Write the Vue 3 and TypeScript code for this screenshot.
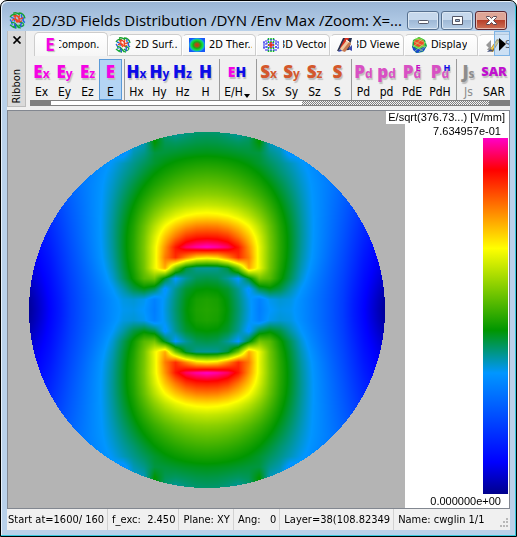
<script setup lang="ts">
import { onMounted, ref } from 'vue'

type Rgb = [number, number, number]

interface Tool {
  main: string
  sub?: string
  sup?: string
  label: string
  tone: string
  size?: string
  active?: boolean
  disabled?: boolean
  menu?: boolean
}

const tabs = [
  { icon: 'letter', label: 'Compon.', cut: true },
  { icon: 'sphere', label: '2D Surf..', cut: false },
  { icon: 'thermal', label: '2D Ther..', cut: false },
  { icon: 'vector', label: '3D Vector', cut: true },
  { icon: 'viewer', label: '3D Viewer', cut: true },
  { icon: 'display', label: 'Display', cut: false },
  { icon: 'stats', label: 'Stat..', cut: false },
]

const groups: Tool[][] = [
  [
    { main: 'E', sub: 'x', label: 'Ex', tone: 'magenta' },
    { main: 'E', sub: 'y', label: 'Ey', tone: 'magenta' },
    { main: 'E', sub: 'z', label: 'Ez', tone: 'magenta' },
    { main: 'E', label: 'E', tone: 'magenta', active: true },
  ],
  [
    { main: 'H', sub: 'x', label: 'Hx', tone: 'blue' },
    { main: 'H', sub: 'y', label: 'Hy', tone: 'blue' },
    { main: 'H', sub: 'z', label: 'Hz', tone: 'blue' },
    { main: 'H', label: 'H', tone: 'blue' },
  ],
  [{ main: 'EH', label: 'E/H', tone: 'mixed', size: 'menu', menu: true }],
  [
    { main: 'S', sub: 'x', label: 'Sx', tone: 'rust' },
    { main: 'S', sub: 'y', label: 'Sy', tone: 'rust' },
    { main: 'S', sub: 'z', label: 'Sz', tone: 'rust' },
    { main: 'S', label: 'S', tone: 'rust' },
  ],
  [
    { main: 'P', sub: 'd', label: 'Pd', tone: 'pink' },
    { main: 'p', sub: 'd', label: 'pd', tone: 'pink' },
    { main: 'P', sub: 'd', sup: 'E', label: 'PdE', tone: 'pink', size: 'wide' },
    { main: 'P', sub: 'd', sup: 'H', label: 'PdH', tone: 'pink', size: 'wide' },
  ],
  [
    { main: 'J', sub: 's', label: 'Js', tone: 'grey', disabled: true },
    { main: 'SAR', label: 'SAR', tone: 'purple', size: 'wide' },
  ],
]

const status = ['Start at=1600/ 160', 'f_exc:  2.450', 'Plane: XY', 'Ang:   0', 'Layer=38(108.82349', 'Name: cwglin 1/1']

/* Colour scale of the legend, from the field minimum to its maximum. */
const scale: [number, Rgb][] = [
  [0, [0, 0, 140]],
  [0.09, [0, 0, 255]],
  [0.336, [0, 150, 255]],
  [0.459, [0, 150, 0]],
  [0.685, [255, 255, 0]],
  [0.91, [255, 0, 0]],
  [1, [255, 0, 200]],
]

/* Normalised |E| in thousandths on one quadrant of the mesh; rows go outwards from the axis. */
const field: number[][] = [
  [490, 483, 455, 405, 350, 295, 335, 348, 343, 320, 290, 260, 225, 187, 135, 92, 50, 8],
  [485, 478, 450, 400, 345, 302, 345, 358, 350, 322, 291, 260, 226, 188, 137, 95, 54, 14],
  [460, 455, 435, 388, 325, 420, 450, 425, 378, 336, 300, 265, 230, 192, 144, 101, 64, 28],
  [425, 418, 385, 332, 440, 560, 535, 470, 415, 358, 312, 273, 236, 198, 152, 108, 76, 44],
  [385, 390, 432, 560, 760, 670, 560, 485, 430, 372, 326, 283, 243, 205, 161, 117, 86, 58],
  [700, 720, 790, 870, 800, 665, 565, 493, 438, 381, 336, 293, 251, 212, 169, 126, 95, 70],
  [1000, 985, 955, 892, 780, 666, 567, 495, 442, 386, 340, 299, 258, 219, 177, 136, 104, 82],
  [890, 885, 862, 805, 736, 650, 562, 493, 442, 388, 342, 303, 264, 226, 185, 146, 114, 94],
  [800, 795, 772, 735, 685, 620, 550, 487, 438, 387, 342, 305, 268, 232, 193, 155, 124, 104],
  [705, 700, 686, 660, 625, 580, 527, 475, 430, 383, 341, 307, 272, 238, 201, 165, 136, 116],
  [635, 630, 620, 602, 577, 543, 502, 460, 420, 378, 339, 309, 276, 244, 210, 177, 150, 130],
  [585, 582, 573, 558, 537, 510, 478, 443, 408, 371, 337, 309, 280, 251, 221, 191, 165, 145],
  [548, 545, 537, 524, 505, 483, 456, 426, 395, 363, 334, 309, 284, 258, 232, 206, 182, 160],
  [515, 512, 505, 493, 478, 459, 434, 407, 382, 354, 328, 304, 282, 262, 242, 220, 198, 178],
  [482, 480, 474, 465, 453, 436, 414, 392, 368, 342, 320, 300, 282, 264, 246, 228, 210, 190],
  [449, 447, 443, 437, 431, 428, 393, 372, 318, 325, 310, 296, 282, 266, 250, 234, 216, 198],
  [426, 424, 418, 412, 418, 460, 368, 350, 308, 310, 300, 290, 280, 266, 250, 234, 216, 198],
  [408, 406, 396, 380, 400, 465, 360, 330, 300, 300, 292, 284, 276, 264, 250, 234, 216, 198],
]

const fieldMap = ref<HTMLCanvasElement | null>(null)
const diameter = 356

function colourOf(value: number): Rgb {
  for (let k = 1; k < scale.length; k++) {
    const [hi, b] = scale[k]
    if (value <= hi || k === scale.length - 1) {
      const [lo, a] = scale[k - 1]
      const t = Math.min(1, Math.max(0, (value - lo) / (hi - lo)))
      return [a[0] + (b[0] - a[0]) * t, a[1] + (b[1] - a[1]) * t, a[2] + (b[2] - a[2]) * t]
    }
  }
  return scale[0][1]
}

function sample(x: number, y: number): number {
  const last = field.length - 1
  const i = Math.min(last - 1, Math.floor(x))
  const j = Math.min(last - 1, Math.floor(y))
  const u = Math.min(1, x - i)
  const v = Math.min(1, y - j)
  const near = field[j][i] * (1 - u) + field[j][i + 1] * u
  const far = field[j + 1][i] * (1 - u) + field[j + 1][i + 1] * u
  return (near * (1 - v) + far * v) / 1000
}

onMounted(() => {
  const context = fieldMap.value?.getContext('2d')
  if (!context) return
  const image = context.createImageData(diameter, diameter)
  const radius = diameter / 2
  const cell = radius / (field.length - 1)
  for (let row = 0; row < diameter; row++) {
    for (let column = 0; column < diameter; column++) {
      const dx = Math.abs(column + 0.5 - radius)
      const dy = Math.abs(row + 0.5 - radius)
      if (dx * dx + dy * dy > radius * radius) continue
      const [r, g, b] = colourOf(sample(dx / cell, dy / cell))
      const at = (row * diameter + column) * 4
      image.data[at] = r
      image.data[at + 1] = g
      image.data[at + 2] = b
      image.data[at + 3] = 255
    }
  }
  context.putImageData(image, 0, 0)
})
</script>

<template>
  <main class="window">
    <header class="titlebar">
      <svg class="title-icon" viewBox="0 0 16 16" aria-hidden="true">
        <g fill="none" stroke-width="1.3">
          <path d="M1 5Q3 1 7 3M9 1Q14 1 15 6M4 1Q8 0 10 3" stroke="#18a32c" />
          <path d="M1 7Q3 9 3 12M14 5Q12 8 15 10M2 5Q6 6 5 9M12 2Q11 5 14 8" stroke="#2468dc" />
          <path d="M4 4Q7 2 9 5T13 5M3 8Q6 5 8 8T12 8M6 3Q5 7 8 10M10 3Q8 7 11 10" stroke="#ee4420" />
          <path d="M2 10Q5 9 7 12T11 15M4 14Q7 11 9 15M10 10Q13 9 14 12M1 12Q4 15 7 15M9 12Q12 15 14 12" stroke="#14a83a" />
          <path d="M5 11Q7 14 6 15M12 10Q10 13 12 14" stroke="#2050d8" />
        </g>
      </svg>
      <h1>2D/3D Fields Distribution /DYN /Env Max /Zoom: X=...</h1>
      <div class="controls">
        <button type="button" aria-label="Minimize">
          <svg viewBox="0 0 30 17"><rect x="10.500" y="8.500" width="10" height="3" rx="1" fill="#fff" stroke="#535666" /></svg>
        </button>
        <button type="button" aria-label="Maximize">
          <svg viewBox="0 0 30 17"><path d="M10.500 4.500h10v8h-10zM13.500 7.500v2h4v-2z" fill="#fff" fill-rule="evenodd" stroke="#535666" /></svg>
        </button>
        <button type="button" class="close" aria-label="Close">
          <svg viewBox="0 0 30 17"><path d="M10.500 4.500h3l2 2 2-2h3v1l-3 3 3 3v1h-3l-2-2-2 2h-3v-1l3-3-3-3z" fill="#fff" stroke="#5b4a55" /></svg>
        </button>
      </div>
    </header>

    <section class="client">
      <div class="ribbon">
        <div class="grip">
          <button type="button" aria-label="Hide ribbon">
            <svg viewBox="0 0 10 8"><path d="M1.500 0.500l7 7M8.500 0.500l-7 7" stroke="#000" stroke-width="1.700" /></svg>
          </button>
          <span>Ribbon</span>
        </div>
        <div class="ribbon-body">
          <nav class="tabs">
            <button v-for="(tab, index) in tabs" :key="tab.label" type="button" class="tab" :class="{ selected: index === 0 }">
              <span v-if="tab.icon === 'letter'" class="tab-letter">E</span>
              <svg v-else class="tab-icon" viewBox="0 0 16 16" aria-hidden="true">
                <g v-if="tab.icon === 'sphere'" fill="none" stroke-width="1.300">
                  <path d="M1 5Q3 1 7 3M9 1Q14 1 15 6M4 1Q8 0 10 3" stroke="#18a32c" />
                  <path d="M1 7Q3 9 3 12M14 5Q12 8 15 10M2 5Q6 6 5 9M12 2Q11 5 14 8" stroke="#2468dc" />
                  <path d="M4 4Q7 2 9 5T13 5M3 8Q6 5 8 8T12 8M6 3Q5 7 8 10M10 3Q8 7 11 10" stroke="#ee4420" />
                  <path d="M2 10Q5 9 7 12T11 15M4 14Q7 11 9 15M10 10Q13 9 14 12M1 12Q4 15 7 15M9 12Q12 15 14 12" stroke="#14a83a" />
                  <path d="M5 11Q7 14 6 15M12 10Q10 13 12 14" stroke="#2050d8" />
                </g>
                <g v-else-if="tab.icon === 'thermal'">
                  <defs>
                    <radialGradient id="heat" cx="0.5" cy="0.5" r="0.62">
                      <stop offset="0" stop-color="#d83010" />
                      <stop offset="0.200" stop-color="#a05818" />
                      <stop offset="0.380" stop-color="#18a818" />
                      <stop offset="0.580" stop-color="#10e040" />
                      <stop offset="0.740" stop-color="#18a0e8" />
                      <stop offset="0.850" stop-color="#1858f8" />
                    </radialGradient>
                  </defs>
                  <rect x="0" y="1" width="16" height="14" fill="url(#heat)" />
                </g>
                <g v-else-if="tab.icon === 'vector'">
                  <path d="M1 4v9M15 4v9M3 3v11M13 3v11" stroke="#2020e8" stroke-dasharray="2 1" />
                  <path d="M5.500 1v14M8 1v14M10.500 1v14" stroke="#10c020" stroke-width="1.500" stroke-dasharray="2 1" />
                  <path d="M0 6h16M0 10h16M4 3h8M4 13h8" stroke="#2828f0" stroke-dasharray="2 1" />
                  <path d="M8 5v6M5 8h6" stroke="#f02020" stroke-width="1.500" />
                </g>
                <g v-else-if="tab.icon === 'viewer'">
                  <path d="M0 14L6 1h9l-3 12z" fill="#27304c" />
                  <path d="M3 11L8 1h4L7 12z" fill="#d83020" />
                  <path d="M2 13L10 3l4 3-7 8z" fill="#f0c8a0" />
                  <path d="M5 14l7-9 2 2-6 8z" fill="#c87850" />
                  <path d="M1 15l2-3 2 2zM11 12l4-4v6z" fill="#3848b0" />
                  <path d="M9 3l3 2" stroke="#fff" />
                </g>
                <g v-else-if="tab.icon === 'display'">
                  <path d="M8 0l6 3 2 6-4 6-7 1-4-6L2 3z" fill="#18a848" />
                  <path d="M1 8l4 4 10-3-2 5-7 2-4-3z" fill="#1848d0" />
                  <path d="M3 3l5-3 5 3 1 6-5 3-6-3z" fill="#68d038" />
                  <path d="M3 4l5-2 5 2v4L8 10 3 8z" fill="#f04828" />
                  <path d="M2 4l12 6M1 8l11 6M4 1l11 5M12 1L2 10M15 5L4 14M15 9l-7 6" fill="none" stroke="#b8ee80" stroke-width="0.600" />
                </g>
                <g v-else>
                  <path d="M1 8l5-5v10zM2 13q2-5 6 0z" fill="#989898" />
                  <path d="M4 14L12 2l3 1-7 12z" fill="#9a7424" />
                  <path d="M6 13l7-9" stroke="#f0cc50" stroke-width="2" />
                  <path d="M2 15q4-5 6-1z" fill="#405080" />
                </g>
              </svg>
              <span class="tab-label"><span :class="{ clipped: tab.cut }">{{ tab.label }}</span></span>
            </button>
            <button type="button" class="tab-scroll" aria-label="Scroll tabs right">
              <svg viewBox="0 0 14 22"><path d="M4 5l7 6-7 7z" fill="#000" /></svg>
            </button>
          </nav>

          <div class="tools">
            <div v-for="(group, g) in groups" :key="g" class="group">
              <button
                v-for="tool in group"
                :key="tool.label"
                type="button"
                class="tool"
                :class="[tool.size, { active: tool.active }]"
                :disabled="tool.disabled"
              >
                <span class="glyph" :class="tool.tone" aria-hidden="true">
                  <template v-if="tool.tone === 'mixed'"><b class="m">E</b><b class="h">H</b></template>
                  <template v-else><b>{{ tool.main }}</b></template>
                  <span v-if="tool.sub" class="sub">{{ tool.sub }}<i v-if="tool.sup" :class="{ h: tool.sup === 'H' }">{{ tool.sup }}</i></span>
                </span>
                <span class="tool-label">{{ tool.label }}<svg v-if="tool.menu" viewBox="0 0 6 4"><path d="M0 0h6L3 4z" /></svg></span>
              </button>
            </div>
          </div>

          <div class="scroller"><i class="dark"></i><i class="light"></i><i class="hatch"></i><i class="dark"></i></div>
        </div>
      </div>

      <div class="view">
        <div class="plot">
          <canvas ref="fieldMap" :width="diameter" :height="diameter" role="img" aria-label="Electric field magnitude in the XY plane"></canvas>
        </div>
        <aside class="legend">
          <p class="unit">E/sqrt(376.73...) [V/mm]</p>
          <p class="max">7.634957e-01</p>
          <div class="bar"></div>
          <p class="min">0.000000e+00</p>
        </aside>
      </div>

      <footer class="status">
        <span v-for="item in status" :key="item">{{ item }}</span>
        <svg class="resize" viewBox="0 0 10 10" aria-hidden="true">
          <path d="M7 0h2v2h-2zM4 3h2v2h-2zM7 3h2v2h-2zM1 7h2v2h-2zM4 7h2v2h-2zM7 7h2v2h-2z" fill="#b8b8b8" />
        </svg>
      </footer>
    </section>
  </main>
</template>

<style>
body {
  margin: 0;
  background: #fff;
}
</style>

<style scoped>
* {
  box-sizing: border-box;
}

button {
  margin: 0;
  padding: 0;
  border: 0;
  background: none;
  color: inherit;
  font: inherit;
}

p,
h1 {
  margin: 0;
  font-weight: normal;
}

.window {
  display: flex;
  flex-direction: column;
  min-height: 100vh;
  padding: 0 6px 6px;
  border: 1px solid #000;
  border-radius: 7px 7px 0 0;
  background: linear-gradient(#98b4d5, #b9d1ea 30px);
  box-shadow: inset -1px -1px #35c8de, inset 1px 1px #e6f0fa;
  color: #000;
  font: 12px/14px "DejaVu Sans Condensed", "Noto Sans", sans-serif;
}

.titlebar {
  display: flex;
  align-items: center;
  height: 30px;
  padding: 8px 3px 0 2px;
}

.title-icon {
  flex: none;
  width: 17px;
  height: 17px;
  margin-right: 6px;
}

h1 {
  flex: 1;
  overflow: hidden;
  white-space: nowrap;
  font: 15px/22px "Open Sans", sans-serif;
}

.controls {
  display: flex;
  gap: 2px;
}

.controls button {
  width: 32px;
  height: 19px;
  border: 1px solid #56708f;
  border-radius: 3px;
  background: linear-gradient(#c6d8ec 45%, #9fb9d6 50%, #b6cde6);
  box-shadow: inset 0 0 0 1px #dbe7f3;
}

.controls .close {
  border-color: #5b2631;
  background: linear-gradient(#dfa596 45%, #b8402a 50%, #cd7156);
  box-shadow: inset 0 0 0 1px #e5b9ae;
}

.controls svg {
  display: block;
}

.client {
  display: flex;
  flex: 1;
  flex-direction: column;
  background: #f0f0f0;
}

.ribbon {
  display: flex;
  height: 79px;
}

.grip {
  display: flex;
  flex: none;
  flex-direction: column;
  align-items: center;
  justify-content: space-between;
  width: 19px;
  height: 76px;
  padding: 5px 0 2px;
  border: 1px solid #bcbcbc;
  border-top: 0;
  background: #dadada;
}

.grip button {
  height: 8px;
}

.grip svg {
  display: block;
  width: 10px;
  height: 8px;
}

.grip span {
  writing-mode: vertical-rl;
  transform: rotate(180deg);
  font-size: 11px;
}

.ribbon-body {
  display: flex;
  flex: 1;
  flex-direction: column;
  min-width: 0;
  padding-left: 4px;
}

.tabs {
  position: relative;
  display: flex;
  align-items: flex-end;
  height: 25px;
  padding-left: 4px;
  overflow: hidden;
}

.tab {
  display: flex;
  flex: none;
  align-items: center;
  gap: 4px;
  width: 74px;
  height: 22px;
  padding: 0 3px 0 6px;
  border: 1px solid #cdcdcd;
  border-left-color: #fff;
  border-radius: 5px 5px 0 0;
  background: linear-gradient(#fff, #f6f6f6);
  font-size: 11px;
  white-space: nowrap;
}

.tab.selected {
  gap: 3px;
  height: 24px;
  padding-left: 9px;
  border-bottom: 0;
  border-left-color: #cdcdcd;
}

.tab-icon {
  flex: none;
  width: 16px;
  height: 16px;
}

.tab-letter {
  width: 12px;
  color: #f404e4;
  font: bold 17px/16px "Open Sans", sans-serif;
  text-shadow: 1px 1px 1px #b9b9b9;
}

.tab-label {
  display: flex;
  overflow: hidden;
}

.clipped {
  margin-left: -4px;
}

.tab-scroll {
  position: absolute;
  top: 0;
  right: 0;
  width: 16px;
  height: 25px;
  border: 1px solid #7eb4e6;
  background: rgb(150 195 240 / 45%);
}

.tab-scroll svg {
  display: block;
}

.tools {
  display: flex;
  height: 44px;
  padding-top: 3px;
}

.group {
  display: flex;
  padding-right: 2px;
}

.group + .group {
  border-left: 1px solid #9a9a9a;
}

.group:last-child {
  padding-right: 0;
}

.tool {
  display: flex;
  flex-direction: column;
  align-items: center;
  width: 23px;
  white-space: nowrap;
}

.tool.menu {
  width: 34px;
}

.tool.wide {
  width: 28px;
}

.tool.active {
  background: #b4d4f4;
  box-shadow: inset 0 0 0 1px #5a9ad8;
}

.glyph {
  display: flex;
  align-items: baseline;
  height: 25px;
  font: bold 17px/25px "Open Sans", sans-serif;
  text-shadow: 1px 2px 1px #bdbdbd;
}

.mixed {
  font-size: 14px;
}

.glyph.purple {
  font-size: 13px;
}

.sub {
  position: relative;
  font-size: 12px;
}

.sub i {
  position: absolute;
  top: -6px;
  left: 2px;
  color: #c808c8;
  font-size: 9px;
  font-style: normal;
}

.magenta,
.m {
  color: #f404e4;
}

.blue,
.h,
.sub .h {
  color: #0c0ce8;
}

.rust {
  color: #d4582c;
}

.pink {
  color: #d850c4;
}

.grey {
  color: #8c8c8c;
}

.purple {
  color: #c010d0;
}

.tool-label {
  display: flex;
  align-items: center;
  line-height: 16px;
}

.tool-label svg {
  width: 6px;
  height: 4px;
  margin: 8px 0 0 1px;
}

.tool:disabled .tool-label {
  color: #8c8c8c;
}

.scroller {
  display: flex;
  height: 6px;
  border-top: 1px solid #808080;
  border-bottom: 1px solid #808080;
}

.dark {
  flex: 21;
  background: #808080;
}

.light {
  flex: 250;
  background: #fff;
}

.hatch {
  flex: 187;
  background: repeating-conic-gradient(#808080 0 25%, #f4f4f4 0 50%) 0 0 / 2px 2px;
}

.view {
  display: flex;
  flex: 1;
  border: 1px solid #828790;
  background: #b4b4b4;
}

.plot {
  display: flex;
  flex: 1;
  align-items: center;
  justify-content: center;
  min-width: 0;
}

canvas {
  display: block;
  max-width: 100%;
}

.legend {
  display: flex;
  flex: none;
  flex-direction: column;
  align-items: flex-end;
  width: 104px;
  background: #fff;
  font: 11px/14px "Liberation Sans", sans-serif;
}

.unit {
  padding: 0 4px 0 2px;
  background: #fff;
  line-height: 13px;
  white-space: nowrap;
}

.max,
.min {
  padding-right: 8px;
}

.bar {
  flex: 1;
  width: 25px;
  margin-right: 1px;
  background: linear-gradient(#ff00c8, #f00 9%, #ff0 31%, #009600 54%, #0096ff 66%, #00f 91%, #00008c);
}

.status {
  display: flex;
  height: 21px;
  padding-left: 1px;
  font-size: 11px;
  line-height: 22px;
  white-space: pre;
}

.status span {
  padding-right: 3px;
}

.status span + span {
  padding-left: 4px;
  border-left: 1px solid #d2d2d2;
}

.resize {
  width: 10px;
  height: 10px;
  margin: 9px 1px 0 auto;
}
</style>
